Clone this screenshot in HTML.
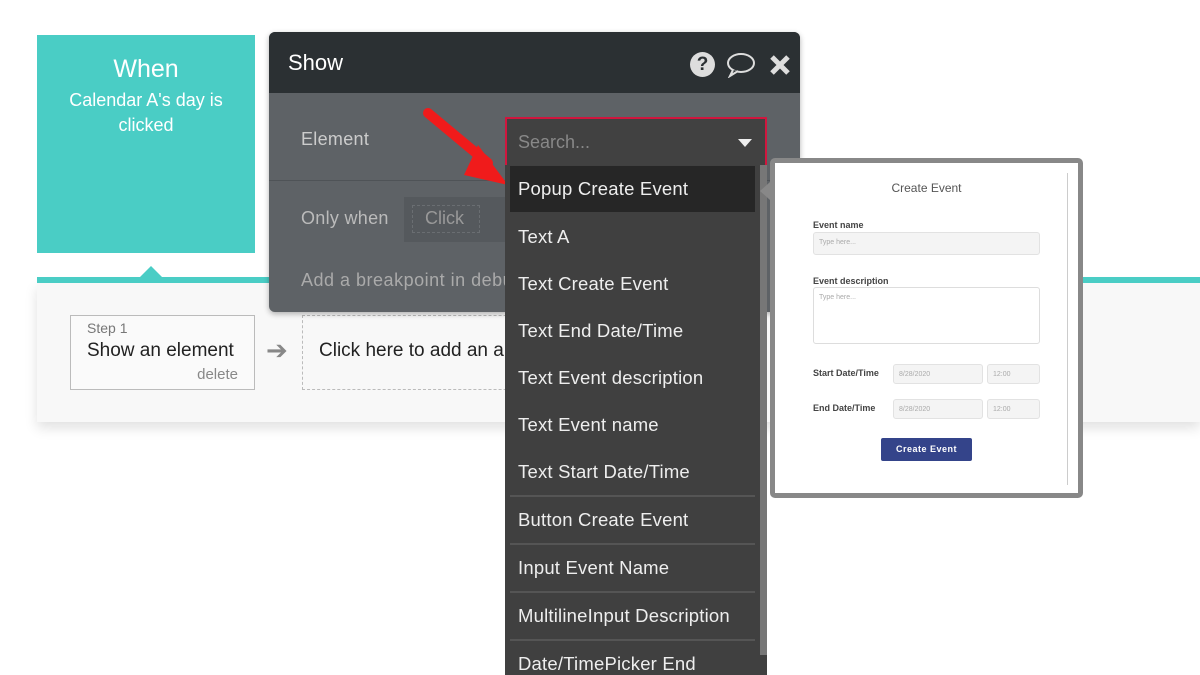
<!DOCTYPE html>
<html><head><style>
*{margin:0;padding:0;box-sizing:border-box}
body{width:1200px;height:675px;background:#fff;position:relative;overflow:hidden;font-family:"Liberation Sans","DejaVu Sans",sans-serif}
.a{position:absolute}
.dd div.it{position:absolute;left:13px;font-size:18.5px;color:#eee;white-space:nowrap;letter-spacing:.2px}
.sep{position:absolute;left:5px;width:245px;height:2px;background:#555}
.lbl{position:absolute;font-size:9px;font-weight:bold;color:#444}
.inp{position:absolute;background:#f4f4f4;border:1px solid #e2e2e2;border-radius:3px;font-size:7px;color:#aaa;padding:6px 5px}
</style></head><body>
<!-- when box -->
<div class="a" style="left:37px;top:35px;width:218px;height:218px;background:#4acdc5;color:#fff;text-align:center">
<div style="font-size:25px;margin-top:20px">When</div>
<div style="font-size:18px;line-height:25px;margin-top:4px">Calendar A's day is<br>clicked</div>
</div>
<!-- card -->
<div class="a" style="left:37px;top:282px;width:1163px;height:140px;background:#f8f8f8;box-shadow:0 6px 12px rgba(0,0,0,.12)"></div>
<div class="a" style="left:37px;top:277px;width:1163px;height:6px;background:#4acdc5"></div>
<div class="a" style="left:140px;top:266px;width:0;height:0;border-left:11px solid transparent;border-right:11px solid transparent;border-bottom:11px solid #4acdc5"></div>
<div class="a" style="left:70px;top:315px;width:185px;height:75px;border:1.5px solid #bbb;background:#fafafa">
<div class="a" style="left:16px;top:4px;font-size:14px;color:#777">Step 1</div>
<div class="a" style="left:16px;top:24px;font-size:19px;color:#222">Show an element</div>
<div class="a" style="right:16px;top:50px;font-size:15px;color:#888">delete</div>
</div>
<div class="a" style="left:266px;top:335px;font-size:26px;color:#888;font-weight:bold">➔</div>
<div class="a" style="left:302px;top:315px;width:250px;height:75px;border:1.5px dashed #bbb">
<div class="a" style="left:16px;top:24px;font-size:19px;color:#222;white-space:nowrap">Click here to add an a</div>
</div>
<!-- show panel -->
<div class="a" style="left:269px;top:32px;width:531px;height:280px;background:#5e6266;border-radius:6px;overflow:hidden;box-shadow:0 2px 6px rgba(0,0,0,.3)">
<div class="a" style="left:0;top:0;width:531px;height:61px;background:#2b3033"></div>
<div class="a" style="left:19px;top:18px;font-size:22px;color:#fff">Show</div>
<div class="a" style="left:421px;top:20px;width:25px;height:25px;border-radius:50%;background:#ddd;color:#2b3033;font-weight:bold;font-size:19px;text-align:center;line-height:25px">?</div>
<svg class="a" style="left:457px;top:20px" width="30" height="26" viewBox="0 0 30 26"><ellipse cx="15" cy="11" rx="13" ry="9" fill="none" stroke="#ddd" stroke-width="2"/><path d="M7 18 L4 24 L12 19" fill="#2b3033" stroke="#ddd" stroke-width="2"/></svg>
<svg class="a" style="left:500px;top:22px" width="22" height="22" viewBox="0 0 22 22"><path d="M3 3L19 19M19 3L3 19" stroke="#ddd" stroke-width="5"/></svg>
<div class="a" style="left:32px;top:97px;font-size:18px;color:#ccc;letter-spacing:.3px">Element</div>
<div class="a" style="left:0;top:148px;width:531px;height:1px;background:#4f5357"></div>
<div class="a" style="left:32px;top:176px;font-size:18px;color:#bbb;letter-spacing:.3px">Only when</div>
<div class="a" style="left:135px;top:165px;width:110px;height:45px;background:#55595d"></div>
<div class="a" style="left:143px;top:173px;width:68px;height:28px;border:1px dashed #6a6e72;font-size:18px;color:#999;padding:2px 0 0 12px">Click</div>
<div class="a" style="left:32px;top:238px;font-size:18px;color:#aaa;white-space:nowrap;letter-spacing:.5px">Add a breakpoint in debug</div>
</div>
<!-- red arrow -->
<svg class="a" style="left:420px;top:105px" width="100" height="90" viewBox="0 0 100 90"><path d="M8 8 L68 58" stroke="#f01b1b" stroke-width="10" stroke-linecap="round"/><path d="M58 40 L88 80 L44 70 Z" fill="#f01b1b"/></svg>
<!-- search box -->
<div class="a" style="left:505px;top:117px;width:262px;height:50px;background:#414141;border:2px solid #d0163e;border-bottom:none">
<div class="a" style="left:11px;top:13px;font-size:18px;color:#888">Search...</div>
<div class="a" style="left:231px;top:20px;border-left:7px solid transparent;border-right:7px solid transparent;border-top:8px solid #eee"></div>
</div>
<!-- dropdown -->
<div class="a dd" style="left:505px;top:165px;width:262px;height:510px;background:#404040">
<div class="a" style="left:255px;top:0;width:7px;height:490px;background:#777"></div>
<div class="a" style="left:5px;top:1px;width:245px;height:46px;background:#262626"></div>
<div class="it" style="top:13px">Popup Create Event</div>
<div class="it" style="top:61px">Text A</div>
<div class="it" style="top:108px">Text Create Event</div>
<div class="it" style="top:155px">Text End Date/Time</div>
<div class="it" style="top:202px">Text Event description</div>
<div class="it" style="top:249px">Text Event name</div>
<div class="it" style="top:296px">Text Start Date/Time</div>
<div class="sep" style="top:330px"></div>
<div class="it" style="top:344px">Button Create Event</div>
<div class="sep" style="top:378px"></div>
<div class="it" style="top:392px">Input Event Name</div>
<div class="sep" style="top:426px"></div>
<div class="it" style="top:440px">MultilineInput Description</div>
<div class="sep" style="top:474px"></div>
<div class="it" style="top:488px">Date/TimePicker End</div>
</div>
<!-- preview -->
<div class="a" style="left:760px;top:182px;border-top:9px solid transparent;border-bottom:9px solid transparent;border-right:10px solid #888"></div>
<div class="a" style="left:770px;top:158px;width:313px;height:340px;border:5px solid #888;border-radius:5px;background:#fff">
<div class="a" style="left:292px;top:10px;width:1px;height:312px;background:#ccc"></div>
<div class="a" style="left:0;top:18px;width:303px;text-align:center;font-size:12px;color:#555">Create Event</div>
<div class="lbl" style="left:38px;top:57px">Event name</div>
<div class="inp" style="left:38px;top:69px;width:227px;height:23px">Type here...</div>
<div class="lbl" style="left:38px;top:113px">Event description</div>
<div class="inp" style="left:38px;top:124px;width:227px;height:57px;background:#fff;border-color:#ddd">Type here...</div>
<div class="lbl" style="left:38px;top:205px">Start Date/Time</div>
<div class="inp" style="left:118px;top:201px;width:90px;height:20px">8/28/2020</div>
<div class="inp" style="left:212px;top:201px;width:53px;height:20px">12:00</div>
<div class="lbl" style="left:38px;top:240px">End Date/Time</div>
<div class="inp" style="left:118px;top:236px;width:90px;height:20px">8/28/2020</div>
<div class="inp" style="left:212px;top:236px;width:53px;height:20px">12:00</div>
<div class="a" style="left:106px;top:275px;width:91px;height:23px;background:#34448a;border-radius:2px;color:#fff;font-size:9px;font-weight:bold;text-align:center;line-height:23px;letter-spacing:.5px">Create Event</div>
</div>
</body></html>
